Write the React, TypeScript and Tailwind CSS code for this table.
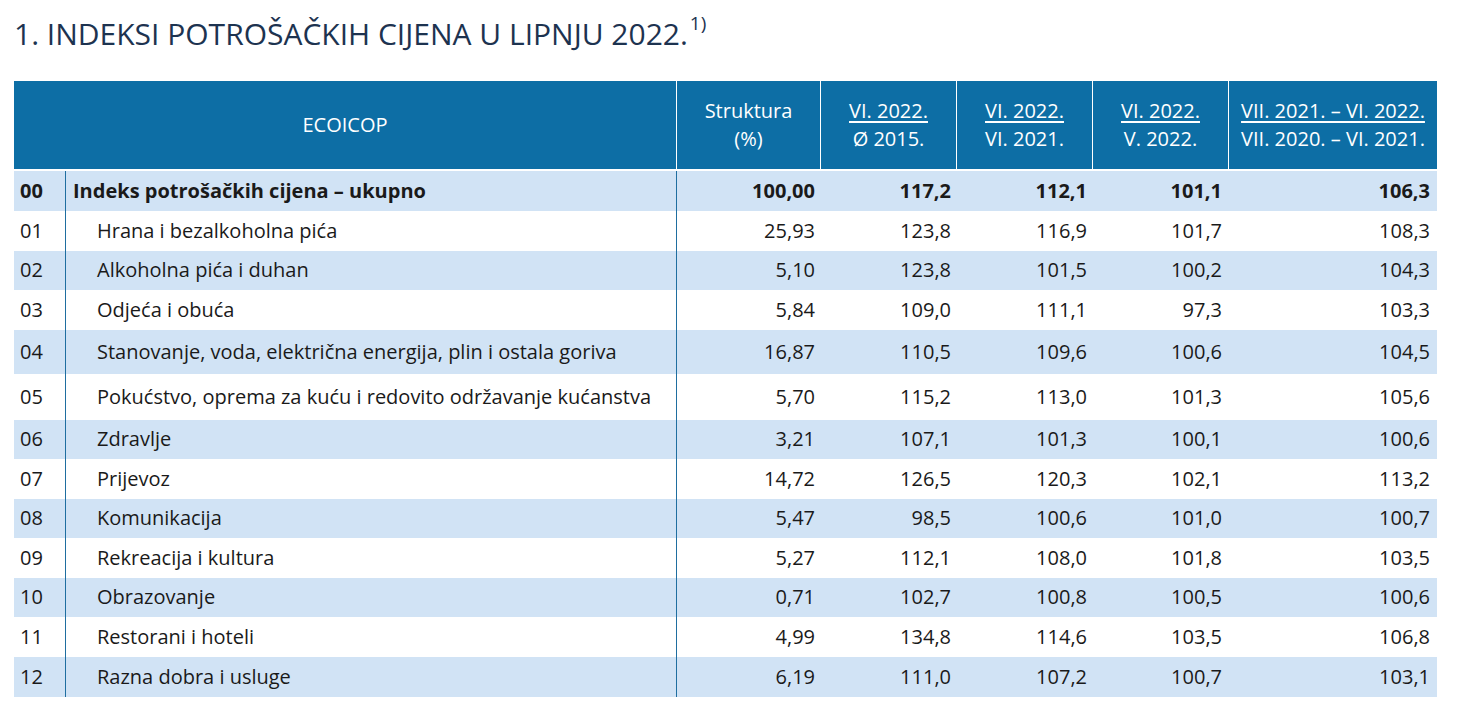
const rows: { code: string; label: string; s: string; a: string; b: string; c: string; d: string; h: string }[] = [
  { code: "00", label: "Indeks potrošačkih cijena – ukupno", s: "100,00", a: "117,2", b: "112,1", c: "101,1", d: "106,3", h: "h-[40px]" },
  { code: "01", label: "Hrana i bezalkoholna pića", s: "25,93", a: "123,8", b: "116,9", c: "101,7", d: "108,3", h: "h-[39.5px]" },
  { code: "02", label: "Alkoholna pića i duhan", s: "5,10", a: "123,8", b: "101,5", c: "100,2", d: "104,3", h: "h-[39.5px]" },
  { code: "03", label: "Odjeća i obuća", s: "5,84", a: "109,0", b: "111,1", c: "97,3", d: "103,3", h: "h-[39.5px]" },
  { code: "04", label: "Stanovanje, voda, električna energija, plin i ostala goriva", s: "16,87", a: "110,5", b: "109,6", c: "100,6", d: "104,5", h: "h-[44px]" },
  { code: "05", label: "Pokućstvo, oprema za kuću i redovito održavanje kućanstva", s: "5,70", a: "115,2", b: "113,0", c: "101,3", d: "105,6", h: "h-[46px]" },
  { code: "06", label: "Zdravlje", s: "3,21", a: "107,1", b: "101,3", c: "100,1", d: "100,6", h: "h-[39.5px]" },
  { code: "07", label: "Prijevoz", s: "14,72", a: "126,5", b: "120,3", c: "102,1", d: "113,2", h: "h-[39.5px]" },
  { code: "08", label: "Komunikacija", s: "5,47", a: "98,5", b: "100,6", c: "101,0", d: "100,7", h: "h-[39.5px]" },
  { code: "09", label: "Rekreacija i kultura", s: "5,27", a: "112,1", b: "108,0", c: "101,8", d: "103,5", h: "h-[39.5px]" },
  { code: "10", label: "Obrazovanje", s: "0,71", a: "102,7", b: "100,8", c: "100,5", d: "100,6", h: "h-[39.5px]" },
  { code: "11", label: "Restorani i hoteli", s: "4,99", a: "134,8", b: "114,6", c: "103,5", d: "106,8", h: "h-[39.5px]" },
  { code: "12", label: "Razna dobra i usluge", s: "6,19", a: "111,0", b: "107,2", c: "100,7", d: "103,1", h: "h-[40px]" },
];

const cols = "grid grid-cols-[51px_611px_144px_136px_136px_136px_209px]";

export default function App() {
  return (
    <div className="min-h-screen bg-white px-[14px] pt-[15px] font-['Open_Sans',sans-serif] text-[#1a1a1a]">
      <h1 className="flex items-start text-[30px] leading-[38px] font-normal text-[#1d3350]">
        <span>1. INDEKSI POTROŠAČKIH CIJENA U LIPNJU 2022.</span>
        <span className="ml-[2px] mt-[-4px] text-[19px] leading-[24px]">1)</span>
      </h1>

      <div className="mt-[28px] w-[1423px]">
        <div className={`${cols} h-[88px] bg-[#0d6ea5] text-white text-[20px] leading-[28px]`}>
          <div className="col-span-2 flex items-center justify-center">ECOICOP</div>
          <div className="flex flex-col items-center justify-center border-l border-white text-center">
            <span>Struktura</span>
            <span>(%)</span>
          </div>
          <div className="flex flex-col items-center justify-center border-l border-white">
            <span className="underline underline-offset-[3px]">VI. 2022.</span>
            <span>Ø 2015.</span>
          </div>
          <div className="flex flex-col items-center justify-center border-l border-white">
            <span className="underline underline-offset-[3px]">VI. 2022.</span>
            <span>VI. 2021.</span>
          </div>
          <div className="flex flex-col items-center justify-center border-l border-white">
            <span className="underline underline-offset-[3px]">VI. 2022.</span>
            <span>V. 2022.</span>
          </div>
          <div className="flex flex-col items-center justify-center border-l border-white">
            <span className="underline underline-offset-[3px]">VII. 2021. – VI. 2022.</span>
            <span>VII. 2020. – VI. 2021.</span>
          </div>
        </div>

        <div className="mt-[2px]">
          {rows.map((r, i) => {
            const bold = i === 0;
            return (
              <div
                key={r.code}
                className={`${cols} ${r.h} items-center text-[20px] ${i % 2 === 0 ? "bg-[#d1e3f5]" : "bg-white"} ${bold ? "font-bold" : ""}`}
              >
                <div className="pl-[6px]">{r.code}</div>
                <div className={`flex h-full items-center border-l border-[#1f6ea0] ${bold ? "pl-[7px]" : "pl-[31px]"}`}>
                  {r.label}
                </div>
                <div className="flex h-full items-center justify-end border-l border-[#1f6ea0] pr-[5px]">{r.s}</div>
                <div className="text-right pr-[5px]">{r.a}</div>
                <div className="text-right pr-[5px]">{r.b}</div>
                <div className="text-right pr-[6px]">{r.c}</div>
                <div className="text-right pr-[7px]">{r.d}</div>
              </div>
            );
          })}
        </div>
      </div>
    </div>
  );
}
